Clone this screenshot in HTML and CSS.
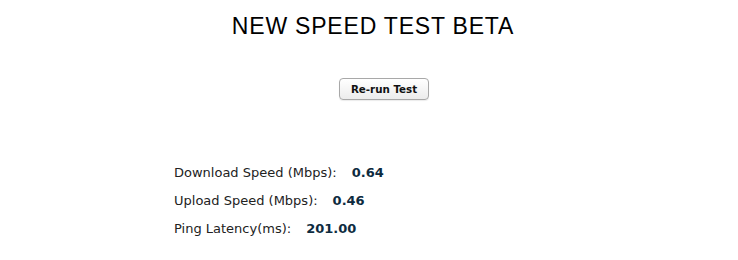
FILE: index.html
```html
<!DOCTYPE html>
<html>
<head>
<meta charset="utf-8">
<link rel="stylesheet" href="styles.css">
</head>
<body>
<div class="page">
  <h1 class="title">NEW SPEED TEST BETA</h1>
  <div class="actions">
    <button class="btn">Re-run Test</button>
  </div>
  <div class="results">
    <div class="row"><span class="label">Download Speed (Mbps):</span><span class="value">0.64</span></div>
    <div class="row"><span class="label">Upload Speed (Mbps):</span><span class="value">0.46</span></div>
    <div class="row"><span class="label">Ping Latency(ms):</span><span class="value">201.00</span></div>
  </div>
</div>
</body>
</html>
```
FILE: styles.css
```css
html, body {
  margin: 0;
  padding: 0;
  background: #fff;
}
.page {
  width: 738px;
  display: flex;
  flex-direction: column;
}
.title {
  margin: 12px 0 0 0;
  padding-left: 8px;
  font-family: "Liberation Sans", Arial, sans-serif;
  font-weight: normal;
  font-size: 23px;
  letter-spacing: 0.8px;
  line-height: 28px;
  color: #000;
  text-align: center;
}
.actions {
  display: flex;
  justify-content: center;
  margin-top: 38px;
  padding-left: 30px;
}
.btn {
  font-family: "DejaVu Sans", Verdana, sans-serif;
  font-weight: bold;
  font-size: 10.3px;
  color: #111;
  height: 22px;
  width: 90px;
  padding: 0;
  border: 1px solid #a8a8a8;
  border-radius: 4px;
  background: linear-gradient(#ffffff, #ececec);
  box-shadow: 0 1px 1px rgba(0,0,0,0.08);
}
.results {
  margin-top: 59px;
  padding-left: 174px;
  display: flex;
  flex-direction: column;
}
.row {
  font-family: "DejaVu Sans", Verdana, sans-serif;
  font-size: 13px;
  line-height: 28px;
  color: #222;
}
.value {
  margin-left: 15px;
  font-weight: bold;
  color: #0e2b40;
}
```
